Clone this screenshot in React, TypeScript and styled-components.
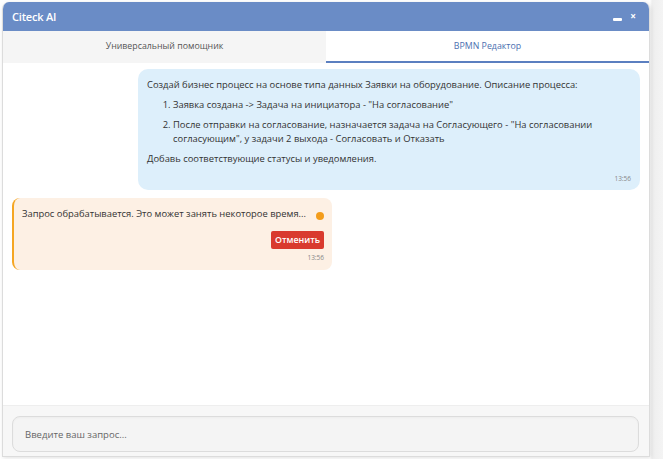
import React from "react";
import styled, { createGlobalStyle } from "styled-components";

const Global = createGlobalStyle`
  html, body { margin: 0; padding: 0; background: #ffffff; }
  body { font-family: "Open Sans", "Noto Sans", sans-serif; }
  #root { width: 663px; height: 459px; overflow: hidden; }
`;

const Page = styled.div`
  width: 663px;
  height: 459px;
  padding: 2px 0 0 2px;
  box-sizing: border-box;
  background: linear-gradient(to right, #ffffff 0, #ffffff 650px, #eeeeee 652px, #f4f4f4 663px);
`;

const Window = styled.div`
  width: 648px;
  height: 455px;
  display: flex;
  flex-direction: column;
  background: #fff;
  border: 1px solid #dcdcdc;
  border-top: none;
  border-radius: 7px 7px 0 0;
  box-sizing: border-box;
  overflow: hidden;
  box-shadow: 1px 1px 4px rgba(0, 0, 0, 0.12);
`;

const Header = styled.div`
  height: 29px;
  flex: none;
  background: #6a8cc6;
  display: flex;
  align-items: center;
  justify-content: space-between;
  padding: 0 13px 0 9px;
`;

const Title = styled.div`
  color: #fff;
  font-size: 11px;
  font-weight: 600;
  letter-spacing: -0.2px;
`;

const HeaderIcons = styled.div`
  display: flex;
  align-items: center;
  gap: 8px;
`;

const MinBar = styled.span`
  display: block;
  width: 9px;
  height: 3px;
  background: #fff;
  margin-top: 6px;
  border-radius: 1px;
`;

const Close = styled.span`
  color: #fff;
  font-size: 10px;
  font-weight: 700;
  line-height: 1;
  margin-top: -1px;
`;

const Tabs = styled.div`
  height: 31px;
  flex: none;
  display: grid;
  grid-template-columns: 323px 1fr;
  border-bottom: 1px solid #e6e6e6;
`;

const Tab = styled.div<{ $active?: boolean }>`
  display: flex;
  align-items: center;
  justify-content: center;
  font-size: 8.8px;
  color: ${(p) => (p.$active ? "#4c6fb0" : "#555")};
  background: ${(p) => (p.$active ? "#fff" : "#f5f5f5")};
  border-bottom: 2px solid ${(p) => (p.$active ? "#5b7fc0" : "transparent")};
  margin-bottom: -1px;
`;

const Messages = styled.div`
  flex: 1;
  display: flex;
  flex-direction: column;
  gap: 8px;
  padding: 6px 9px 0 9px;
  overflow: hidden;
`;

const UserBubble = styled.div`
  align-self: flex-end;
  width: 502px;
  box-sizing: border-box;
  background: #ddeffb;
  border-radius: 10px;
  padding: 9px 9px 7px 9px;
  color: #333;
  font-size: 9.4px;
  line-height: 14px;
`;

const Para = styled.p`
  margin: 0;
`;

const List = styled.ol`
  margin: 6px 0;
  padding-left: 26px;
`;

const Item = styled.li`
  margin: 6px 0;
`;

const Time = styled.div<{ $gap?: number }>`
  text-align: right;
  font-size: 6.5px;
  color: #888;
  line-height: 9px;
  margin-top: ${(p) => p.$gap ?? 4}px;
`;

const BotBubble = styled.div`
  width: 320px;
  box-sizing: border-box;
  background: #fdf0e4;
  border-left: 2px solid #f5a623;
  border-radius: 8px;
  padding: 9px 8px 8px 8px;
  color: #333;
  font-size: 9.4px;
  line-height: 14px;
`;

const BotRow = styled.div`
  display: flex;
  align-items: center;
  justify-content: space-between;
`;

const Dot = styled.span`
  width: 8px;
  height: 8px;
  border-radius: 50%;
  background: #f39c1a;
  margin-top: 3px;
`;

const Actions = styled.div`
  display: flex;
  justify-content: flex-end;
  margin-top: 10px;
`;

const CancelButton = styled.button`
  width: 53px;
  height: 18px;
  border: none;
  border-radius: 2px;
  background: #d93a2e;
  color: #fff;
  font-family: inherit;
  font-size: 8.8px;
  font-weight: 600;
  padding: 0;
`;

const InputArea = styled.div`
  flex: none;
  height: 51px;
  background: #f7f7f7;
  border-top: 1px solid #eeeeee;
  padding: 10px 10px 0 9px;
  box-sizing: border-box;
`;

const InputBox = styled.div`
  height: 34px;
  border: 1px solid #dcdcdc;
  border-radius: 8px;
  background: #f4f4f4;
  display: flex;
  align-items: center;
  padding: 0 12px;
  font-size: 9.5px;
  color: #666;
  box-shadow: inset 0 1px 2px rgba(0, 0, 0, 0.03);
`;

export default function App() {
  return (
    <>
      <Global />
      <Page>
        <Window>
          <Header>
            <Title>Citeck AI</Title>
            <HeaderIcons>
              <MinBar />
              <Close>×</Close>
            </HeaderIcons>
          </Header>
          <Tabs>
            <Tab>Универсальный помощник</Tab>
            <Tab $active>BPMN Редактор</Tab>
          </Tabs>
          <Messages>
            <UserBubble>
              <Para>
                Создай бизнес процесс на основе типа данных Заявки на оборудование. Описание процесса:
              </Para>
              <List>
                <Item>Заявка создана -&gt; Задача на инициатора - "На согласование"</Item>
                <Item>
                  После отправки на согласование, назначается задача на Согласующего - "На согласовании
                  согласующим", у задачи 2 выхода - Согласовать и Отказать
                </Item>
              </List>
              <Para>Добавь соответствующие статусы и уведомления.</Para>
              <Time $gap={8}>13:56</Time>
            </UserBubble>
            <BotBubble>
              <BotRow>
                <span>Запрос обрабатывается. Это может занять некоторое время...</span>
                <Dot />
              </BotRow>
              <Actions>
                <CancelButton>Отменить</CancelButton>
              </Actions>
              <Time>13:56</Time>
            </BotBubble>
          </Messages>
          <InputArea>
            <InputBox>Введите ваш запрос...</InputBox>
          </InputArea>
        </Window>
      </Page>
    </>
  );
}
